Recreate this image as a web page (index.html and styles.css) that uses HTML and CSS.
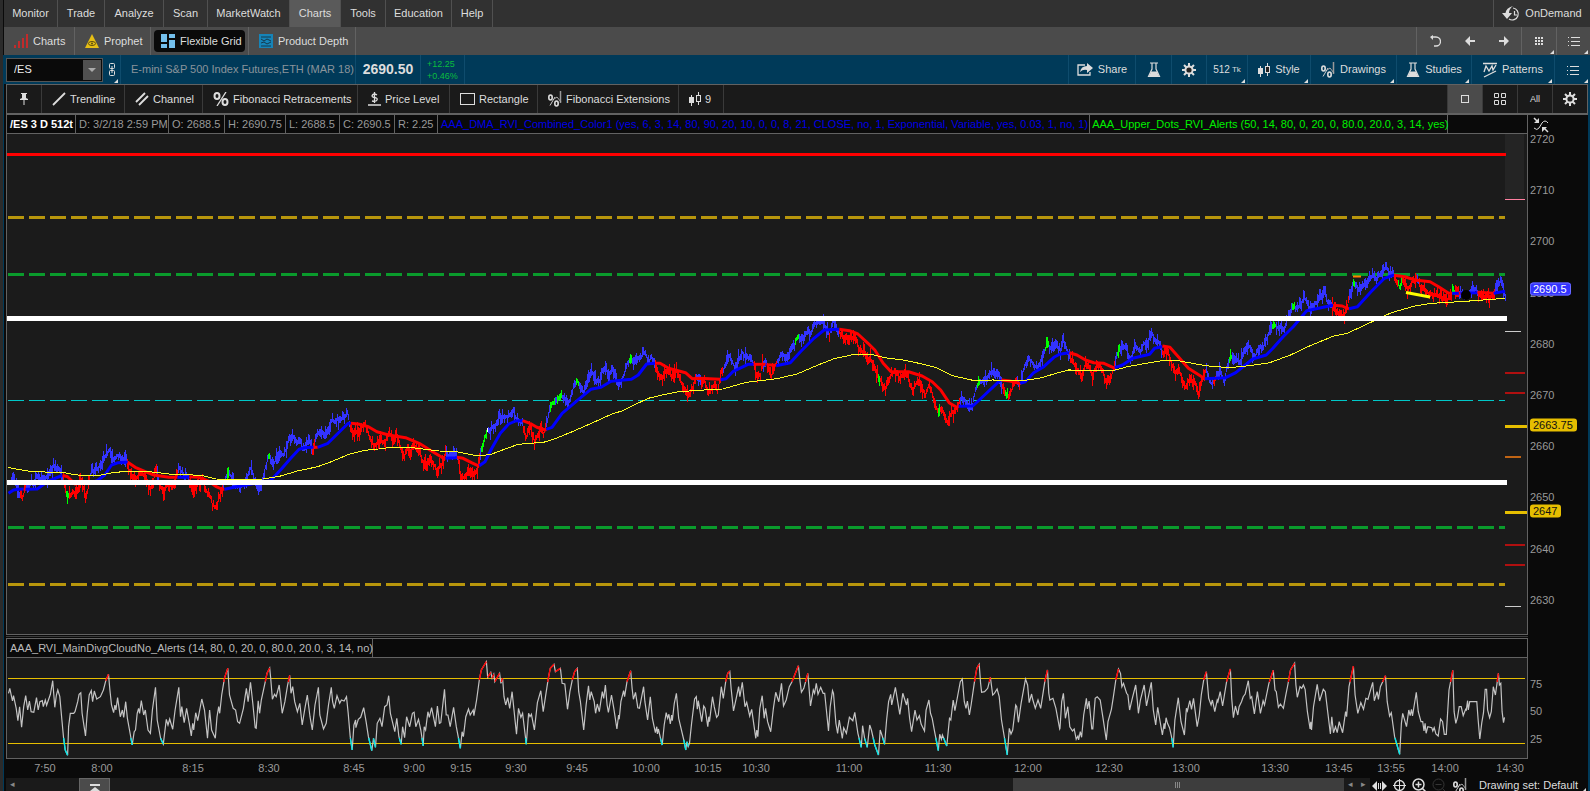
FILE: index.html
```html
<!DOCTYPE html>
<html lang="en">
<head>
<meta charset="utf-8">
<title>Charts</title>
<link rel="stylesheet" href="styles.css">
</head>
<body>
<svg class="defs" aria-hidden="true">
  <symbol id="i-flask" viewBox="0 0 14 16"><path d="M3 1h8M5 1v6L1.5 14.5h11L9 7V1" fill="none" stroke="#ddd" stroke-width="1.2"/><path d="M4.2 9.5h5.6l2.4 5H1.8z" fill="#ddd"/></symbol>
  <symbol id="i-gear" viewBox="0 0 14 14"><path d="M7 0v14M0 7h14M2 2l10 10M12 2L2 12" stroke="#ddd" stroke-width="2"/><circle cx="7" cy="7" r="3.6" fill="#222" stroke="#ddd" stroke-width="2"/></symbol>
  <symbol id="i-candle" viewBox="0 0 12 14"><path d="M2.5 3v11M9.500 0v13" stroke="#ddd"/><rect x="0" y="5" width="5" height="6" fill="#ddd"/><rect x="7.500" y="3.500" width="4" height="6" fill="#222" stroke="#ddd"/></symbol>
  <symbol id="i-list" viewBox="0 0 12 10"><path d="M0 1.500h1M0 5.500h1M0 9.500h1M3 1.500h9M3 5.500h9M3 9.500h9" stroke="#ddd"/></symbol>
  <symbol id="i-fibext" viewBox="0 0 14 16"><path d="M2 14.500L7 6" stroke="#ccc"/><path d="M12.500 0v12" stroke="#999" stroke-width="1.500"/><path d="M6 8l3-2 4 5" stroke="#aaa" fill="none"/><ellipse cx="2.500" cy="6.500" rx="1.700" ry="2.500" fill="none" stroke="#ddd" stroke-width="1.600"/><ellipse cx="8.500" cy="12.500" rx="1.700" ry="2.500" fill="none" stroke="#ddd" stroke-width="1.600"/></symbol>
</svg>
<div class="app">
  <nav class="menu">
    <button class="w54">Monitor</button><button class="w47">Trade</button><button class="w59">Analyze</button><button class="w44">Scan</button><button class="w82">MarketWatch</button><button class="w51 on">Charts</button><button class="w45">Tools</button><button class="w66">Education</button><button class="w41">Help</button>
    <button class="ondemand"><svg width="19" height="16" viewBox="0 0 19 16"><path d="M11 2a6 6 0 1 1-4 11" fill="none" stroke="#ddd" stroke-width="1.200"/><path d="M12.500 5v4h3" fill="none" stroke="#ddd" stroke-width="1.200"/><path d="M11 0Q4 2 3.500 7H0l5 6 5-6H7q0-4 4-7z" fill="#ddd"/></svg>OnDemand</button>
  </nav>
  <nav class="tabs">
    <button class="tab t1"><svg width="14" height="14" viewBox="0 0 14 14"><path d="M0 11h2v3H0zM4 7h2v7H4zM8 4h2v10H8zM12 0h2v14h-2z" fill="#c22b2b"/></svg>Charts</button>
    <button class="tab t2"><svg width="14" height="14" viewBox="0 0 14 14"><path d="M7 0l7 14H0z" fill="#e6be14"/><ellipse cx="7" cy="9.500" rx="3.500" ry="2" fill="none" stroke="#5a4b10"/><circle cx="7" cy="9.500" r="1" fill="#5a4b10"/></svg>Prophet</button>
    <span class="tab t3"><button class="pill"><svg width="14" height="14" viewBox="0 0 14 14"><path d="M0 0h6v8H0zM8 0h6v4H8zM0 10h6v4H0zM8 6h6v8H8z" fill="#74bfec"/></svg>Flexible Grid</button></span>
    <button class="tab t4"><svg width="14" height="14" viewBox="0 0 14 14"><rect width="14" height="14" fill="#1684b8"/><path d="M2 3h10M2 5l3 2 3-2 4 2M2 9l3-1 3 2 4-2M2 12h10" fill="none" stroke="#14394d"/></svg>Product Depth</button>
    <div class="right">
      <button class="b36" aria-label="Undo"><svg width="12" height="12" viewBox="0 0 12 12"><path d="M2 2h5a4 4 0 0 1 0 9H5" fill="none" stroke="#ddd" stroke-width="1.300"/><path d="M4 0L1 2l3 3z" fill="#ddd"/></svg></button><button class="b34" aria-label="Back"><svg width="10" height="10" viewBox="0 0 10 10"><path d="M0 5l5-5v4h5v2H5v4z" fill="#ddd"/></svg></button><button class="b34" aria-label="Forward"><svg width="10" height="10" viewBox="0 0 10 10"><path d="M10 5L5 0v4H0v2h5v4z" fill="#ddd"/></svg></button><button class="b35 sep corner" aria-label="Grid"><svg width="8" height="8" viewBox="0 0 8 8"><path d="M0 1h8M0 4h8M0 7h8" stroke="#ddd" stroke-width="2" stroke-dasharray="2 1"/></svg></button><button class="b34 sep corner" aria-label="Menu"><svg width="12" height="10"><use href="#i-list"/></svg></button>
    </div>
  </nav>
  <div class="symbolbar">
    <label class="combo"><input type="text" value="/ES" aria-label="Symbol"><button aria-label="Open list"></button></label>
    <button class="link corner" aria-label="Link"><svg width="6" height="13" viewBox="0 0 6 13"><rect x=".5" y=".5" width="5" height="5" rx="1" fill="none" stroke="#ddd"/><rect x=".5" y="7.500" width="5" height="5" rx="1" fill="none" stroke="#ddd"/><path d="M3 3v7" stroke="#ddd"/></svg></button>
    <span class="desc">E-mini S&amp;P 500 Index Futures,ETH (MAR 18)</span>
    <span class="price">2690.50</span>
    <span class="change">+12.25<br>+0.46%</span>
    <div class="right">
      <button class="s67 sep"><svg width="16" height="13" viewBox="0 0 16 13"><path d="M8 2H1v10h12V9" fill="none" stroke="#ddd" stroke-width="1.300"/><path d="M3 9Q4 3 10 3V0l6 5-6 5V7Q6 6 3 9z" fill="#ddd"/></svg>Share</button><button class="s36 sep" aria-label="Edit studies"><svg width="14" height="16"><use href="#i-flask"/></svg></button><button class="s35 sep" aria-label="Settings"><svg width="14" height="14"><use href="#i-gear"/></svg></button><button class="s41 sep corner tick">512 <small>Tk</small></button><button class="s63 sep corner"><svg width="12" height="14"><use href="#i-candle"/></svg>Style</button><button class="s86 sep corner"><svg width="14" height="16"><use href="#i-fibext"/></svg>Drawings</button><button class="s75 sep corner"><svg width="14" height="16"><use href="#i-flask"/></svg>Studies</button><button class="s83 sep corner"><svg width="14" height="16" viewBox="0 0 14 16"><path d="M0 1.500h14M1 10l2-6 3 5 3-5 1 4 3-5M1 15L13 9" fill="none" stroke="#ddd" stroke-width="1.300"/></svg>Patterns</button><button class="s36 sep corner" aria-label="Menu"><svg width="12" height="10"><use href="#i-list"/></svg></button>
    </div>
  </div>
  <div class="work">
    <div class="drawbar">
      <button class="d35" aria-label="Pin"><svg width="8" height="12" viewBox="0 0 8 12"><path d="M1 0h6v1H6v4l2 1v1H0V6l2-1V1H1zM3.500 7h1v5h-1z" fill="#ddd"/></svg></button><button class="d83"><svg width="14" height="14" viewBox="0 0 14 14"><path d="M1 13L13 1" stroke="#ddd" stroke-width="1.800"/></svg>Trendline</button><button class="d78"><svg width="14" height="14" viewBox="0 0 14 14"><path d="M1 10L10 1M4 13L13 4" stroke="#ddd" stroke-width="1.800"/></svg>Channel</button><button class="d155"><svg width="16" height="14" viewBox="0 0 16 14"><ellipse cx="4" cy="4" rx="2.500" ry="3" fill="none" stroke="#ddd" stroke-width="2"/><ellipse cx="12" cy="10" rx="2.500" ry="3" fill="none" stroke="#ddd" stroke-width="2"/><path d="M13 0L4 14" stroke="#ddd" stroke-width="1.300"/></svg>Fibonacci Retracements</button><button class="d92"><svg width="13" height="14" viewBox="0 0 13 14"><path d="M9 3Q6 1 4.500 3t2 2.500T9 8 4 9M6.500 0v11M0 13h13" fill="none" stroke="#ddd" stroke-width="1.300"/></svg>Price Level</button><button class="d88"><svg width="15" height="12" viewBox="0 0 15 12"><rect x=".5" y=".5" width="14" height="11" fill="none" stroke="#ddd"/></svg>Rectangle</button><button class="d141"><svg width="14" height="16"><use href="#i-fibext"/></svg>Fibonacci Extensions</button><button class="d45"><svg width="12" height="14"><use href="#i-candle"/></svg>9</button>
      <div class="right">
        <button class="g35 on" aria-label="Single"><svg width="9" height="9"><rect x=".5" y=".5" width="7" height="7" fill="none" stroke="#ddd"/></svg></button><button class="g35" aria-label="Quad"><svg width="12" height="12" viewBox="0 0 12 12"><path d="M.5.500h4v4h-4zM7.500.500h4v4h-4zM.5 7.500h4v4h-4zM7.500 7.500h4v4h-4z" fill="none" stroke="#ddd"/></svg></button><button class="g35 all">All</button><button class="g35" aria-label="Settings"><svg width="14" height="14"><use href="#i-gear"/></svg></button>
      </div>
    </div>
    <div class="charts">
      <section class="pane">
        <div class="legend"><span class="c69 b">/ES 3 D 512t</span><span class="c93">D: 3/2/18 2:59 PM</span><span class="c56">O: 2688.5</span><span class="c61">H: 2690.75</span><span class="c54">L: 2688.5</span><span class="c55">C: 2690.5</span><span class="c43">R: 2.25</span><span class="study blue">AAA_DMA_RVI_Combined_Color1 (yes, 6, 3, 14, 80, 90, 20, 10, 0, 0, 8, 21, CLOSE, no, 1, Exponential, Variable, yes, 0.03, 1, no, 1)</span><span class="c358 green">AAA_Upper_Dots_RVI_Alerts (50, 14, 80, 0, 20, 0, 80.0, 20.0, 3, 14, yes)</span><span class="rest"></span></div>
        <svg id="price" class="plot" viewBox="7 134 1520 500" preserveAspectRatio="none"></svg>
      </section>
      <div class="axis" id="paxis">
        <svg class="scale" width="16" height="16" viewBox="0 0 16 16"><path d="M1 11q3 3 5 0l3-5q3-4 6 0" fill="none" stroke="#ddd"/><path d="M6 6V1L1 6zM9 10h5l-5 5z" fill="#ddd"/><path d="M1 1l3 3M15 15l-4-4" stroke="#ddd" stroke-width="1.500"/></svg>
      </div>
      <div class="splitter"></div>
      <section class="pane">
        <div class="legend"><span class="c366">AAA_RVI_MainDivgCloudNo_Alerts (14, 80, 0, 20, 0, 80.0, 20.0, 3, 14, no)</span></div>
        <svg id="rvi" class="plot" viewBox="7 658 1520 100" preserveAspectRatio="none"></svg>
      </section>
      <div class="axis" id="raxis"></div>
      <div class="times" id="times"></div>
    </div>
    <div class="footer">
      <button class="arrow" aria-label="Scroll left">◂</button>
      <div class="track"><button class="home" aria-label="Expand"><svg width="10" height="11" viewBox="0 0 10 11"><path d="M0 2h10" stroke="#ddd" stroke-width="2"/><path d="M5 4l5 4H6.500v3h-3V8H0z" fill="#ddd"/></svg></button><div class="thumb"><svg width="6" height="6"><path d="M.5 0v6M2.500 0v6M4.500 0v6" stroke="#888"/></svg></div></div>
      <button class="arrow" aria-label="Scroll left">◂</button><button class="arrow" aria-label="Scroll right">▸</button>
      <div class="tools">
        <button aria-label="Pan"><svg width="15" height="10" viewBox="0 0 15 10"><path d="M0 5l5-5v10zM15 5l-5-5v10zM6 2h1v6H6zM8 2h1v6H8z" fill="#ddd"/></svg></button><button aria-label="Crosshair"><svg width="13" height="13" viewBox="0 0 13 13"><circle cx="6.500" cy="6.500" r="5" fill="none" stroke="#ddd" stroke-width="1.300"/><path d="M6.500 0v13M0 6.500h13" stroke="#ddd"/></svg></button><button aria-label="Zoom in"><svg width="15" height="15" viewBox="0 0 15 15"><circle cx="6.500" cy="6.500" r="5.500" fill="none" stroke="#ddd" stroke-width="1.500"/><path d="M3.500 6.500h6M6.500 3.500v6M10.500 10.500l4 4" stroke="#ddd" stroke-width="1.500"/></svg></button><button class="off" aria-label="Zoom out" disabled><svg width="15" height="15" viewBox="0 0 15 15"><circle cx="6.500" cy="6.500" r="5.500" fill="none" stroke="#ddd"/><path d="M3.500 6.500h6M10.500 10.500l4 4" stroke="#ddd"/></svg></button><button aria-label="Drawings"><svg width="14" height="16"><use href="#i-fibext"/></svg></button>
      </div>
      <button class="set corner">Drawing set: Default</button>
    </div>
  </div>
</div>
<script src="chart.js"></script>
</body>
</html>
```

FILE: styles.css
```css
* { box-sizing: border-box; }
html, body { height: 100%; margin: 0; }
body { background: #2b2b2b; color: #ddd; font: 11px/13px "Liberation Sans", Arial, sans-serif; overflow: hidden; }
button { font: inherit; color: inherit; background: none; border: 0; padding: 0; margin: 0; display: flex; align-items: center; white-space: nowrap; flex: none; }
svg { flex: none; display: block; }
.defs { position: absolute; width: 0; height: 0; }
.app { height: 100vh; margin-left: 3px; display: flex; flex-direction: column; background: #0a0a0a; border-left: 1px solid #0a0a0a; }
.right { margin-left: auto; display: flex; align-self: stretch; }
.right button { justify-content: center; gap: 5px; height: 100%; }
.corner { position: relative; }
.corner::after { content: ""; position: absolute; right: 2px; bottom: 1px; border-left: 4px solid transparent; border-bottom: 4px solid #ddd; }

.menu { height: 27px; flex: none; display: flex; background: #313131; }
.menu button { justify-content: center; border-right: 1px solid #505050; }
.menu .on { background: #5a5a5a; }
.menu .ondemand { margin-left: auto; width: 97px; gap: 4px; border-right: 0; border-left: 1px solid #505050; }
.w54 { width: 54px; } .w47 { width: 47px; } .w59 { width: 59px; } .w44 { width: 44px; } .w82 { width: 82px; }
.w51 { width: 51px; } .w45 { width: 45px; } .w66 { width: 66px; } .w41 { width: 41px; }

.tabs { height: 28px; flex: none; display: flex; background: #4b4b4b; }
.tab { display: flex; align-items: center; gap: 5px; border-right: 1px solid #626262; padding-left: 10px; }
.t1 { width: 71px; } .t2 { width: 76px; } .t3 { width: 98px; padding-left: 3px; } .t4 { width: 107px; }
.pill { height: 22px; width: 91px; gap: 5px; padding-left: 7px; background: #0a0a0a; border-radius: 4px; }
.tabs .right { border-left: 1px solid #626262; }
.tabs .sep { border-left: 1px solid #626262; }
.b36 { width: 36px; } .b34 { width: 34px; } .b35 { width: 35px; }

.symbolbar { height: 29px; flex: none; display: flex; align-items: center; background: #003a59; margin-left: -1px; }
.combo { width: 97px; height: 24px; margin-left: 3px; display: flex; border: 1px solid #555; background: #0a0a0a; padding: 1px; }
.combo input { flex: 1; min-width: 0; border: 0; padding: 0 6px; background: none; color: #eee; font: inherit; }
.combo button { width: 18px; background: #505050; justify-content: center; }
.combo button::after { content: ""; border: 4px solid transparent; border-top-color: #aaa; border-bottom: 0; }
.link { width: 17px; height: 100%; justify-content: center; }
.desc, .price, .change { align-self: stretch; display: flex; align-items: center; border-left: 1px solid #0f4c6d; white-space: nowrap; }
.desc { width: 235px; padding-left: 10px; color: #8a949b; }
.price { width: 65px; justify-content: center; font-size: 14px; font-weight: bold; }
.change { width: 45px; padding-left: 6px; border-right: 1px solid #0f4c6d; color: #0bbd3e; font-size: 9px; line-height: 12px; }
.symbolbar .sep { border-left: 1px solid #0f4c6d; }
.s67 { width: 67px; } .s36 { width: 36px; } .s35 { width: 35px; } .s41 { width: 41px; } .s63 { width: 63px; }
.s86 { width: 86px; } .s75 { width: 75px; } .s83 { width: 83px; }
.right .tick { gap: 2px; font-size: 10px; }
.tick small { font-size: 8px; }

.work { flex: 1; min-height: 0; display: flex; flex-direction: column; margin-left: -1px; padding-left: 2px; border-left: 1px solid #003a59; border-right: 2px solid #003a59; }
.drawbar { height: 31px; flex: none; display: flex; background: #1a1a1a; border: 1px solid #626262; border-bottom-width: 2px; }
.drawbar > button { border-right: 1px solid #3a3a3a; gap: 4px; padding-left: 10px; }
.drawbar .g35 { border-left: 1px solid #3a3a3a; }
.drawbar .on { background: #4b4b4b; }
.drawbar .d35 { padding: 0; justify-content: center; }
.d35 { width: 35px; } .d83 { width: 83px; } .d78 { width: 78px; } .d155 { width: 155px; } .d92 { width: 92px; }
.d88 { width: 88px; } .d141 { width: 141px; } .d45 { width: 45px; } .g35 { width: 35px; }
.all { font-size: 9px; }

.charts { flex: 1; min-height: 0; display: grid; grid-template-columns: 1fr 60px; grid-template-rows: 1fr 3px 121px 19px; }
.pane { display: flex; flex-direction: column; min-width: 0; min-height: 0; border: 1px solid #626262; background: #1b1b1b; }
.pane:first-child { border-top: 0; }
.legend { height: 19px; flex: none; display: flex; background: #0a0a0a; border-bottom: 1px solid #626262; color: #999; }
.legend span { padding-left: 3px; line-height: 19px; white-space: nowrap; border-right: 1px solid #626262; flex: none; }
.legend .b { color: #fff; font-weight: bold; }
.legend .study { padding-right: 1px; }
.legend .c358 { padding-left: 2px; }
.legend .rest { flex: 1; min-width: 0; border-right: 0; }
.blue { color: #0000e6; } .green { color: #00f000; }
.c69 { width: 69px; } .c93 { width: 93px; } .c56 { width: 56px; } .c61 { width: 61px; } .c54 { width: 54px; }
.c55 { width: 55px; } .c43 { width: 43px; } .c358 { width: 358px; } .c366 { width: 366px; color: #bbb; }
.plot { flex: 1; width: 100%; min-height: 0; }
.splitter { grid-column: 1 / -1; height: 1px; margin: 1px 60px 0 0; background: #3a3a3a; }
.axis { position: relative; color: #999; }
.axis span { position: absolute; left: 2px; transform: translateY(-50%); }
.axis .tag { padding: 0 4px 0 3px; border-radius: 3px; left: 2px; }
.tag.now { background: #3333ff; color: #fff; outline: 1px solid #6c6cff; outline-offset: -1px; }
.tag.lvl { background: #e6be00; color: #111; }
.scale { position: absolute; left: 5px; top: 2px; }
.times { position: relative; grid-column: 1; color: #999; }
.times span { position: absolute; top: 3px; transform: translateX(-50%); }

.footer { height: 13px; flex: none; display: flex; overflow: hidden; align-items: flex-start; }
.arrow { width: 13px; height: 13px; justify-content: center; color: #888; background: #1a1a1a; font-size: 9px; }
.track { flex: 1; height: 13px; display: flex; background: #1a1a1a; }
.home { width: 31px; margin-left: 60px; align-items: flex-start; justify-content: center; padding-top: 4px; background: #4b4b4b; border: 1px solid #666; border-bottom: 0; }
.thumb { width: 25%; margin-left: auto; background: #3d3d3d; display: flex; align-items: center; justify-content: center; }
.tools { display: flex; gap: 3px; padding-left: 1px; }
.tools button { width: 17px; height: 15px; justify-content: center; }
.off { opacity: .2; }
.set { width: 109px; height: 15px; margin-left: 11px; }
```

FILE: chart.js
```js
const KX = 530 / 1568, KY = 1 / 3;
const place = (ox, oy, s) => s.trim().split(/\s+/).map(p => {
  const [x, y] = p.split(',').map(Number);
  return [ox + x * KX, oy + y * KY];
});

/* Coloured runs: "b 1,2 3,4 r 5,6" */
const runs = blocks => {
  const out = [];
  blocks.forEach(([ox, oy, s]) => s.trim().split(/(?=[a-z])/).forEach(r => {
    out.push({ c: r[0], p: place(ox, oy, r.slice(1)) });
  }));
  return out;
};

const price = runs([
[0, 360, `b 30,355 42,350 50,395 56,410 r 58,385 64,420 72,385 b 78,375 84,380 90,365 98,375 108,345 118,355 130,350 140,350 150,330 156,312 163,325 172,322 180,340
r 187,365 192,390 g 198,410 r 205,405 215,395 224,402 232,375 237,348 243,370 252,410 258,390 264,350 b 268,335 278,328 290,322 300,305 310,288 318,272 323,268 330,290 336,300 345,285 355,290 365,298 373,290
r 378,315 385,345 392,350 400,360 408,345 416,335 422,340 430,355 437,375 445,388 452,360 460,325 b 465,345 r 470,365 477,385 485,395 492,375 500,370 510,385 518,350 524,335 b 528,320 536,335 545,345 555,345
r 562,375 568,390 576,385 585,370 592,365 598,345 606,380 612,400 620,405 626,430 635,440 642,430 647,410 655,395 b 662,365 668,350 g 673,338 b 680,345 690,365 700,375 710,382 718,370 727,355 735,335 742,320 748,345 756,375 770,375 778,345 785,315 g 795,285
b 802,300 810,308 818,290 828,275 837,285 845,265 852,240 860,230 870,232 878,250 885,238 895,265 903,255 912,238 920,265 r 925,275 928,265 b 932,240 942,212 950,215 960,222 970,205 978,180 988,182 998,175 1008,175 1018,172 1027,155 1032,185
r 1038,210 1045,215 1055,215 1065,205 1078,190 1085,210 1095,240 1105,255 1115,250 1122,230 1130,245 1140,240 1150,212 1158,235 1166,245 1172,225 1178,245 1185,270 1195,285 1203,265 1212,275 1220,250 1230,265 1242,280 1252,315 1262,305 1270,295 1280,305 1290,330 1300,320 1308,310 1315,280
b 1320,285 1330,290 1342,275 1350,285 r 1356,310 1362,345 1370,352 1380,345 1390,325 1400,345 1410,330 1416,295 b 1420,275 g 1425,255 1431,238 1437,222 w 1440,208 b 1445,215 1455,200 1465,195 1475,170 1485,170 1495,170 1505,165 1517,150 1525,175 1535,180 1543,185 r 1548,210 1556,230 1563,200`],
[530, 300, `r 0,380 6,400 13,425 22,400 30,385 38,400 46,380 b 48,370 55,335 g 62,312 68,305 b 76,300 g 82,298 89,285 b 96,290 105,300 114,305 122,280 130,250 g 138,240
b 147,255 158,280 168,240 176,225 185,215 192,240 200,240 206,245 213,210 223,200 230,225 242,205 250,230 258,250 266,250 276,225 286,190 g 297,178 b 305,190 313,170 325,175 336,155 343,165 350,185 357,165 366,185
r 372,210 380,225 390,235 400,210 410,215 420,230 433,210 440,235 450,255 460,270 470,280 480,260 487,235 b 493,230 500,235 r 507,250 515,240 522,265 528,280 538,260 545,250 553,272 560,240 565,215
b 572,205 580,180 590,165 598,185 606,210 614,180 627,155 635,170 645,172 655,180 r 664,200 668,225 680,225 686,185 b 690,190 697,180 r 704,205 712,230 720,200 726,190 b 732,180 745,155 753,175 765,160 778,140 g 790,108
b 800,120 810,115 820,90 830,100 836,75 850,65 865,66 873,80 880,95 r 884,105 b 890,80 897,60 903,70 910,100 r 915,95 925,112 940,115 955,112 965,118 973,150 985,155 997,180 1005,170 1015,200 1025,220 g 1030,230
r 1038,245 1050,265 1060,240 1068,220 1078,215 1085,215 1093,235 1103,215 1115,225 1125,260 1132,270 1143,245 1150,240 1160,265 1168,285 1178,255 1185,265 1195,305 1203,325 g 1208,332 r 1215,325 1225,345 1235,370 1245,335 1255,335 1268,310
b 1275,290 1282,295 1290,310 1300,322 1308,315 1315,275 g 1325,245 b 1335,245 1345,235 1355,225 1365,210 1375,225 1383,215 1392,245 r 1398,265 g 1410,290 r 1415,285 1425,265 1436,235 b 1440,240 r 1448,260
b 1453,225 1460,205 1470,175 1480,180 1495,200 1505,195 1515,165 g 1530,128 b 1540,145 1550,130 1560,140`],
[1060, 240, `b 0,330 5,310 10,300 18,325 25,345 r 33,360 42,375 52,390 65,405 75,370 85,375 95,405 105,380 117,375 127,400 137,430 148,415 157,385 b 163,360 g 173,325
b 182,320 193,320 200,340 207,360 215,330 225,318 235,335 245,310 257,305 270,275 280,300 290,305 297,320 r 303,340 313,335 322,345 330,370 338,400 350,380 360,420 370,440 380,420 390,420 400,430 409,460 418,425 427,400
b 432,385 440,420 447,430 r 457,420 b 465,400 475,395 485,425 492,385 g 503,345 b 512,360 520,350 530,370 540,335 550,325 558,315 568,340 578,345 587,320 600,320 612,290 622,265 g 632,250 b 642,260 652,260 662,270 670,240 680,215 g 688,197
b 700,205 710,190 722,172 730,185 740,210 750,190 760,185 770,165 783,155 790,185 800,190 r 808,205 820,215 835,235 845,210 850,195 b 855,165 862,145 g 867,130 b 875,135 882,145 892,140 903,130 912,115 925,105 935,115 945,100 955,90 963,78 972,95 983,102
r 992,115 g 1005,142 r 1015,115 1027,150 1040,125 1053,115 b 1058,122 r 1065,140 1080,150 1090,162 1100,160 1115,165 1125,170 1143,180 1155,165 g 1162,148 r 1172,165 b 1185,160 1200,165 1215,150 1230,148
r 1240,165 1250,175 1260,165 1270,172 1280,160 b 1290,145 1303,120 1310,145 1317,170`]]);

const ribbon = runs([
[0, 360, `b 25,400 40,390 55,388 r 70,387 b 75,388 110,387 140,365 180,348 r 185,346 200,350 215,365 225,375 b 280,365 290,360 310,345 330,315 350,308 372,307 r 378,307 400,322 430,335 455,345 500,352 520,352 b 525,352 555,352
r 560,350 590,352 620,365 640,380 658,388 b 664,388 700,380 740,373 800,362 830,330 860,295 885,268 900,263 920,262 r 928,262 b 940,262 970,250 1000,220 1030,190 r 1038,190 1060,192 1090,200 1115,215 1150,225 1200,233 1240,250 1280,275 1312,295
b 1318,295 1348,293 r 1352,292 1370,295 1395,308 1414,317 b 1418,317 1435,305 1455,265 1480,220 1505,192 1525,183 1540,182 r 1546,182 1568,190`],
[530, 300, `r 0,370 20,382 45,390 b 48,388 65,382 95,340 130,310 150,293 180,268 210,262 240,244 300,238 320,225 345,192 368,190 r 370,190 385,190 410,205 460,218 480,236 500,235 562,238 b 564,239 580,236 600,215 645,193 660,193
r 662,193 685,193 b 697,193 r 700,194 725,196 b 728,197 770,188 800,155 840,115 870,90 910,88 r 915,88 945,92 970,102 1000,130 1020,150 1045,190 1068,215 1120,215 1160,228 1190,245 1215,270 1240,308 1262,322
b 1268,319 1310,318 1345,285 1390,242 r 1395,240 1420,243 1447,250 b 1450,250 1465,245 1490,218 1520,200 1550,172 1568,162`],
[1060, 240, `b 0,343 25,338 r 28,338 50,345 75,360 100,368 130,370 158,383 b 162,383 185,375 215,355 265,343 280,325 300,320 r 303,318 325,322 350,350 380,385 425,414 b 428,416 490,413 520,398 570,357 610,345 630,325 660,290 690,260 730,212 800,197
r 808,196 835,198 850,205 b 855,206 880,200 920,155 960,115 985,106 r 988,106 1020,110 1050,120 1095,125 1120,140 1150,160 b 1160,160 r 1180,160 b 1185,160 1230,158 r 1235,157 1280,160 b 1283,160 1317,154`]]);

const slow = [
...place(0, 360, `24,322 50,328 90,334 150,337 190,338 220,344 260,348 300,345 340,337 400,333 450,336 500,342 560,344 600,347 640,357 700,358 780,357 830,348 880,333 940,320 980,305 1035,282 1080,271 1120,267 1160,262 1220,263 1300,273 1350,275 1410,287 1450,284 1500,265 1530,254 1560,250`),
...place(530, 300, `0,430 40,427 70,418 130,393 190,366 245,341 275,332 310,314 350,295 400,283 440,275 530,269 570,267 640,247 730,236 790,222 850,196 900,176 960,163 1010,163 1050,173 1110,181 1160,192 1200,202 1250,227 1310,241 1370,240 1450,243 1510,234 1560,219`),
...place(1060, 240, `0,397 25,390 160,391 200,380 260,369 310,361 350,362 430,377 500,383 560,377 620,368 680,346 740,317 810,288 850,280 930,242 980,218 1050,198 1100,190 1200,184 1317,175`)];

const rvi = [
...place(0, 630, `25,190 29,175 37,213 40,197 48,235 53,272 58,230 64,292 70,230 76,197 82,240 87,213 92,245 100,247 108,203 113,240 118,215 125,212 128,230 134,210 138,226 149,193 156,152 162,232 167,195 171,180 177,200 183,270 188,322 193,360 200,376 203,290 208,250 218,250 222,245 230,215 234,193 239,188 243,250 253,318 258,250 264,195 270,182 274,215 279,183 286,207 297,200 306,180 313,152 321,133 325,180 330,225 336,248 340,225 343,240 348,203 356,260 362,240 366,262 372,215 377,265 383,300 391,345 397,305 401,300 406,250 410,235 413,250 418,212 425,255 430,240 438,300 445,310 451,240 460,172 465,270 475,325 483,342 492,268 497,285 502,267 511,298 518,240 529,172 534,260 538,230 545,278 552,235 560,280 566,318 570,280 573,300 579,248 585,272 597,207 605,240 614,325 620,240 626,300 637,325 642,260 647,230 650,250 656,195 664,145 674,115 679,195 690,235 697,240 703,275 709,280 720,235 725,200 729,175 734,215 741,157 748,220 755,293 758,295 764,212 768,250 773,210 785,155 790,130 798,114 801,145 806,208 812,193 817,200 826,165 835,250 843,215 851,165 857,136 861,190 866,170 872,215 880,245 887,220 894,285 902,235 909,195 917,260 924,300 932,225 942,172 946,255 957,297 965,280 972,225 980,172 984,215 989,235 997,197 1005,220 1010,210 1018,213 1025,200 1030,250 1036,320 1042,360 1047,285 1052,270 1053,293 1060,268 1067,262 1076,233 1083,275 1090,320 1100,362 1105,325 1111,352 1116,280 1124,265 1130,290 1138,230 1145,225 1150,197 1155,250 1168,305 1174,265 1180,320 1187,343 1191,290 1197,323 1203,260 1212,290 1220,250 1225,247 1230,290 1238,268 1245,300 1252,348 1255,290 1259,300 1266,245 1270,262 1277,233 1288,290 1294,228 1300,280 1304,278 1315,178 1320,255 1325,255 1332,290 1342,232 1350,290 1362,355 1367,305 1371,320 1378,260 1386,237 1391,255 1400,240 1402,257 1410,210 1418,150 1424,120 1439,95 1443,142 1452,127 1456,145 1461,133 1464,155 1472,140 1478,130 1482,160 1487,145 1491,200 1496,225 1502,203 1508,235 1515,185 1528,313 1534,235 1541,262 1546,250 1557,343 1564,250`),
...place(530, 630, `0,260 4,253 13,300 22,218 32,182 39,245 46,200 54,145 60,115 71,103 75,125 90,115 95,160 103,162 111,238 118,185 125,150 132,125 140,115 144,185 149,215 159,300 166,225 173,167 177,210 181,185 190,215 194,250 199,222 205,245 214,185 218,205 223,165 228,225 232,247 241,195 248,235 257,297 262,255 264,268 269,215 277,182 280,200 287,155 298,122 302,175 306,208 312,187 319,233 324,235 336,170 340,215 348,270 356,200 362,265 371,308 375,290 377,312 380,297 386,325 391,345 397,285 403,248 407,265 411,253 415,282 419,255 421,272 427,220 433,190 440,265 455,330 461,360 464,335 468,350 472,340 478,280 487,207 492,200 495,238 498,212 508,275 514,228 518,235 526,290 529,260 531,275 540,200 545,230 552,262 557,255 566,170 572,205 579,155 585,130 591,124 595,175 602,243 610,205 617,170 621,200 628,157 636,230 641,217 650,258 656,238 668,325 671,300 674,320 680,235 687,197 693,265 697,235 703,275 712,305 720,235 727,187 736,215 744,160 750,228 758,210 767,170 775,155 794,107 799,155 803,187 810,175 822,130 830,228 838,180 842,190 847,160 852,193 860,172 867,190 872,190 883,303 888,230 895,182 898,190 905,280 910,310 915,270 924,325 928,293 936,310 945,262 955,272 961,247 970,310 980,352 984,287 990,325 998,352 1005,285 1010,300 1020,345 1031,375 1036,300 1042,318 1049,343 1055,270 1061,215 1067,193 1070,225 1081,172 1094,253 1103,190 1109,210 1114,225 1117,205 1123,265 1129,305 1139,240 1145,270 1152,257 1157,282 1167,303 1172,240 1180,210 1185,250 1190,265 1197,305 1208,362 1212,313 1217,328 1220,315 1233,348 1241,265 1245,270 1252,210 1257,242 1263,210 1273,155 1279,147 1285,215 1290,235 1294,213 1300,255 1305,225 1315,155 1322,115 1329,103 1333,160 1336,187 1345,185 1354,175 1362,142 1369,195 1374,190 1382,177 1388,200 1395,270 1412,375 1418,295 1423,312 1428,300 1437,225 1440,230 1445,277 1453,220 1466,147 1472,165 1477,218 1484,192 1487,207 1495,235 1503,210 1511,235 1523,155 1531,120 1535,190 1538,210 1547,205 1549,212 1556,235 1567,297`),
...place(1060, 630, `0,295 5,215 10,190 16,265 23,230 29,290 37,303 42,297 48,328 53,318 55,330 60,305 64,322 70,255 78,205 81,237 86,213 94,297 97,297 104,205 110,200 119,210 127,262 137,330 142,275 152,238 158,200 165,150 173,117 179,130 183,170 188,160 197,190 201,195 206,240 214,205 224,165 229,215 232,250 238,210 249,165 256,228 270,157 276,240 283,285 289,232 303,315 308,280 310,297 314,263 318,280 324,293 330,320 335,352 340,270 350,203 358,275 368,315 374,235 377,243 384,212 389,238 395,205 406,290 412,255 418,195 425,150 433,125 440,205 447,225 451,210 458,245 465,210 467,215 474,185 481,228 493,155 504,117 508,205 513,263 519,228 526,255 530,230 537,215 542,200 548,192 557,152 563,205 567,200 575,252 584,185 593,250 601,212 605,225 618,160 631,121 636,180 640,185 646,232 652,222 661,235 667,200 674,165 682,120 694,100 698,165 702,202 710,170 715,175 720,165 725,178 732,245 740,297 742,275 744,300 750,230 761,163 768,213 779,178 785,185 792,245 800,312 804,260 809,308 815,290 820,308 826,275 836,308 845,245 848,260 855,170 868,108 873,195 881,250 890,218 898,238 905,205 911,208 925,157 930,212 938,185 942,208 948,170 963,137 968,215 975,258 980,248 990,320 1005,373 1010,280 1014,250 1025,290 1032,240 1036,257 1040,238 1043,258 1054,187 1060,245 1068,275 1073,275 1077,303 1080,280 1083,310 1088,290 1100,293 1103,303 1107,293 1112,312 1119,318 1126,267 1132,275 1137,313 1143,313 1151,180 1162,121 1166,245 1171,280 1176,262 1181,230 1187,230 1193,257 1200,238 1202,240 1206,212 1208,240 1212,215 1233,215 1237,268 1242,327 1248,278 1253,248 1258,178 1262,178 1265,240 1271,263 1276,245 1282,170 1288,195 1297,130 1300,165 1304,160 1308,245 1312,278 1315,262`)];

const COL = { b: '#3333ff', r: '#ff0000', g: '#00ff00', w: '#ffffff' };
const RIB = { b: '#0000ff', r: '#ff0000' };
const path = (d, stroke, w, extra = '') => `<path d="${d}" fill="none" stroke="${stroke}" stroke-width="${w}" ${extra}/>`;
const poly = pts => 'M' + pts.map(p => p[0].toFixed(1) + ' ' + p[1].toFixed(1)).join('L');
const hline = (x1, x2, y, stroke, w, extra) => path(`M${x1} ${y}H${x2}`, stroke, w, extra);
const CRISP = 'shape-rendering="crispEdges"';

/* Price pane */
const pts = price.flatMap(r => r.p.map(p => [...p, r.c]));
const bars = { b: '', r: '', g: '', w: '' };
let seed = 7;
const rnd = () => (seed = (seed * 16807) % 2147483647) / 2147483647;
for (let i = 0; i < pts.length - 1; i++) {
  const [x1, y1, c1] = pts[i], [x2, y2, c2] = pts[i + 1];
  for (let x = Math.ceil(x1); x < x2; x++) {
    const t = (x - x1) / (x2 - x1), y = y1 + (y2 - y1) * t;
    const c = t < 0.5 ? c1 : c2;
    const up = 1 + rnd() * rnd() * 10, down = 2 + rnd() * rnd() * 10;
    bars[c] += `M${x + 0.5} ${Math.round(y - up)}V${Math.round(y + down)}`;
  }
}
const dash = 'stroke-dasharray="16 5" ' + CRISP;
let s = '<rect x="1505" y="134" width="19" height="65" fill="#242424"/>';
s += hline(7, 1506, 154.5, '#ff0000', 3, CRISP);
s += hline(8, 1505, 217.5, '#b8960c', 3, dash) + hline(8, 1505, 274.5, '#0a9b2c', 3, dash);
s += hline(8, 1505, 400.5, '#00c8c8', 1, dash);
s += hline(8, 1505, 527.5, '#0a9b2c', 3, dash) + hline(8, 1505, 584.5, '#b8960c', 3, dash);
for (const c in bars) s += path(bars[c], COL[c], 1, CRISP);
ribbon.forEach((r, i) => {
  const n = ribbon[i + 1];
  const p = n && n.p[0][0] - r.p[r.p.length - 1][0] < 10 ? [...r.p, n.p[0]] : r.p;
  s += path(poly(p), RIB[r.c], 3, 'stroke-linejoin="round"');
});
s += path(poly(slow), '#ffff20', 1, CRISP);
s += hline(1353, 1361, 276.5, '#ff8000', 2) + path('M1406 292.500L1430 297', '#ffff00', 3);
s += '<circle cx="1466" cy="295" r="5" fill="#000"/>';
s += hline(7, 1507, 318.5, '#fff', 5, CRISP) + hline(7, 1507, 482.5, '#fff', 5, CRISP);
[[199.5, 20, '#ff80a0', 1], [331.5, 16, '#ccc', 1], [373, 20, '#b01010', 2], [393, 20, '#b01010', 2], [426.5, 22, '#e6be00', 3],
 [457, 16, '#c06414', 2], [512.5, 22, '#e6be00', 3], [545, 20, '#b01010', 2], [565, 20, '#b01010', 2], [606.5, 16, '#ccc', 1]]
  .forEach(([y, len, c, w]) => { s += hline(1505, 1505 + len, y, c, w, CRISP); });
document.getElementById('price').innerHTML = s;

/* RVI pane */
let base = poly(rvi), hot = '', cold = '';
for (let i = 0; i < rvi.length - 1; i++) {
  const [x1, y1] = rvi[i], [x2, y2] = rvi[i + 1];
  const at = y => x1 + (x2 - x1) * (y - y1) / (y2 - y1);
  if (y2 < y1 && y2 < 679) { const y = Math.min(y1, 682); hot += `M${at(y)} ${y}L${x2} ${y2}`; }
  if (y2 > y1 && y2 > 743) { const y = Math.max(y1, 738); cold += `M${at(y)} ${y}L${x2} ${y2}`; }
}
document.getElementById('rvi').innerHTML =
  hline(8, 1525, 678.5, '#e6be00', 1, CRISP) + hline(8, 1525, 743.5, '#e6be00', 1, CRISP) +
  path(base, '#c4c4c4', 1.2) + path(hot, '#ff0000', 1.4) + path(cold, '#00e6e6', 1.4);

/* Axes */
const label = (text, style, cls = '') => `<span class="${cls}" style="${style}">${text}</span>`;
const pa = document.getElementById('paxis');
pa.insertAdjacentHTML('beforeend', [2720, 2710, 2700, 2690, 2680, 2670, 2660, 2650, 2640, 2630]
  .map((v, i) => label(v, `top:${((24 + i * 51.2) / 5.2).toFixed(2)}%`)).join('') +
  label('2690.5', 'top:33.50%', 'tag now') + label('2663.75', 'top:59.60%', 'tag lvl') + label('2647', 'top:76.20%', 'tag lvl'));
document.getElementById('raxis').innerHTML = [[75, 46], [50, 73], [25, 101]].map(([v, y]) => label(v, `top:${(y / 1.21).toFixed(2)}%`)).join('');
document.getElementById('times').innerHTML = [['7:50', 45], ['8:00', 102], ['8:15', 193], ['8:30', 269], ['8:45', 354], ['9:00', 414], ['9:15', 461], ['9:30', 516],
  ['9:45', 577], ['10:00', 646], ['10:15', 708], ['10:30', 756], ['11:00', 849], ['11:30', 938], ['12:00', 1028], ['12:30', 1109], ['13:00', 1186], ['13:30', 1275],
  ['13:45', 1339], ['13:55', 1391], ['14:00', 1445], ['14:30', 1510]].map(([t, x]) => label(t, `left:${((x - 6) / 15.22).toFixed(2)}%`)).join('');
```
